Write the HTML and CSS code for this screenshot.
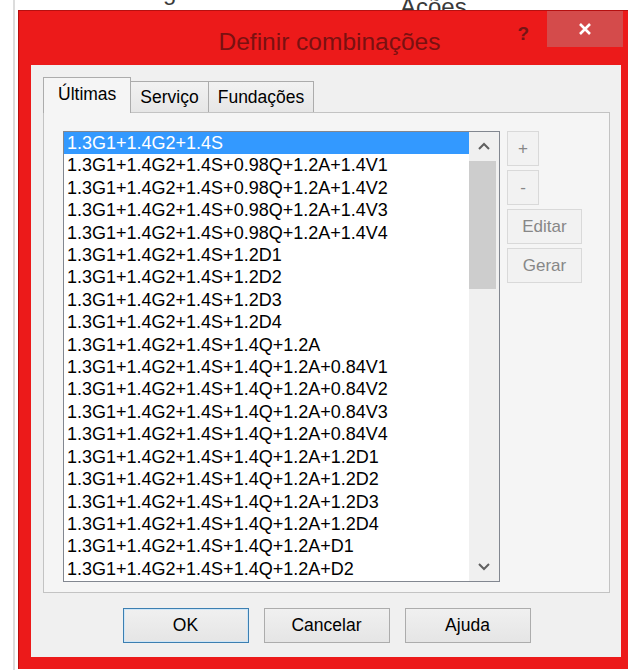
FILE: index.html
```html
<!DOCTYPE html>
<html lang="pt">
<head>
<meta charset="utf-8">
<title>Definir combinações</title>
<link rel="stylesheet" href="styles.css">
</head>
<body>
<div class="desk">
  <div class="behind">
    <div class="behind-row behind-row-a">g</div>
    <div class="behind-row behind-row-b">Ações</div>
  </div>

  <div class="dialog">
    <div class="titlebar">
      <div class="title">Definir combinações</div>
      <div class="caption">
        <span class="help">?</span>
        <span class="close">
          <svg width="14" height="12" viewBox="0 0 14 12"><path d="M2 1 L12 11 M12 1 L2 11" stroke="#fff" stroke-width="2.6" fill="none"/></svg>
        </span>
      </div>
    </div>

    <div class="client">
      <div class="tabs">
        <div class="tab active">Últimas</div>
        <div class="tab">Serviço</div>
        <div class="tab">Fundações</div>
      </div>

      <div class="pane">
        <div class="listbox">
          <ul class="items">
            <li class="sel">1.3G1+1.4G2+1.4S</li>
            <li>1.3G1+1.4G2+1.4S+0.98Q+1.2A+1.4V1</li>
            <li>1.3G1+1.4G2+1.4S+0.98Q+1.2A+1.4V2</li>
            <li>1.3G1+1.4G2+1.4S+0.98Q+1.2A+1.4V3</li>
            <li>1.3G1+1.4G2+1.4S+0.98Q+1.2A+1.4V4</li>
            <li>1.3G1+1.4G2+1.4S+1.2D1</li>
            <li>1.3G1+1.4G2+1.4S+1.2D2</li>
            <li>1.3G1+1.4G2+1.4S+1.2D3</li>
            <li>1.3G1+1.4G2+1.4S+1.2D4</li>
            <li>1.3G1+1.4G2+1.4S+1.4Q+1.2A</li>
            <li>1.3G1+1.4G2+1.4S+1.4Q+1.2A+0.84V1</li>
            <li>1.3G1+1.4G2+1.4S+1.4Q+1.2A+0.84V2</li>
            <li>1.3G1+1.4G2+1.4S+1.4Q+1.2A+0.84V3</li>
            <li>1.3G1+1.4G2+1.4S+1.4Q+1.2A+0.84V4</li>
            <li>1.3G1+1.4G2+1.4S+1.4Q+1.2A+1.2D1</li>
            <li>1.3G1+1.4G2+1.4S+1.4Q+1.2A+1.2D2</li>
            <li>1.3G1+1.4G2+1.4S+1.4Q+1.2A+1.2D3</li>
            <li>1.3G1+1.4G2+1.4S+1.4Q+1.2A+1.2D4</li>
            <li>1.3G1+1.4G2+1.4S+1.4Q+1.2A+D1</li>
            <li>1.3G1+1.4G2+1.4S+1.4Q+1.2A+D2</li>
          </ul>
          <div class="vscroll">
            <div class="arrow">
              <svg width="12" height="8" viewBox="0 0 12 8"><path d="M1 7 L6 2 L11 7" stroke="#606060" stroke-width="2" fill="none"/></svg>
            </div>
            <div class="thumb"></div>
            <div class="track"></div>
            <div class="arrow">
              <svg width="12" height="8" viewBox="0 0 12 8"><path d="M1 1 L6 6 L11 1" stroke="#606060" stroke-width="2" fill="none"/></svg>
            </div>
          </div>
        </div>

        <div class="side">
          <button class="sbtn small" disabled>+</button>
          <button class="sbtn small" disabled>-</button>
          <button class="sbtn wide" disabled>Editar</button>
          <button class="sbtn wide" disabled>Gerar</button>
        </div>
      </div>

      <div class="actions">
        <button class="btn default">OK</button>
        <button class="btn">Cancelar</button>
        <button class="btn">Ajuda</button>
      </div>
    </div>
  </div>
</div>
</body>
</html>
```

FILE: styles.css
```css
* { box-sizing: border-box; }

html, body {
  margin: 0;
  height: 100%;
}

body {
  background: #ffffff;
  overflow: hidden;
  font-family: "Liberation Sans", Arial, sans-serif;
}

.desk {
  position: relative;
  width: 628px;
  height: 670px;
  overflow: hidden;
}

/* window lying behind the dialog */
.behind {
  display: flow-root;
  margin-left: 13px;
  height: 100%;
  border-left: 2px solid #dcdcdc;
  color: #3a3a3a;
  font-size: 24px;
  line-height: 24px;
}

.behind-row-a {
  margin-top: -20px;
  padding-left: 148px;
}

.behind-row-b {
  margin-top: -9px;
  padding-left: 385px;
}

/* dialog frame */
.dialog {
  position: absolute;
  left: 18px;
  top: 10px;
  width: 610px;
  height: 659px;
  background: #ec1a1a;
  border-top: 1px solid #b51010;
  border-left: 1px solid #b51010;
  display: flex;
  flex-direction: column;
}

.titlebar {
  height: 54px;
  display: grid;
  grid-template-columns: 1fr auto 1fr;
}

.title {
  grid-column: 2;
  padding-left: 12px;
  padding-top: 7px;
  font-size: 24.5px;
  line-height: 47px;
  color: #7a1111;
  white-space: nowrap;
}

.caption {
  grid-column: 3;
  display: flex;
  justify-content: flex-end;
  align-items: flex-start;
}

.help {
  margin-top: 5px;
  margin-right: 18px;
  font-size: 19px;
  font-weight: bold;
  line-height: 36px;
  color: #761515;
}

.close {
  width: 76px;
  height: 36px;
  margin-right: 5px;
  background: #d44b4b;
  display: flex;
  align-items: center;
  justify-content: center;
}

/* client area */
.client {
  flex: 1;
  margin: 0 7px 12px 12px;
  padding: 12px 11px 14px 12px;
  background: #f0f0f0;
  display: flex;
  flex-direction: column;
}

.tabs {
  height: 35px;
  display: flex;
  align-items: flex-end;
  position: relative;
  z-index: 1;
}

.tab {
  height: 31px;
  padding: 0 9px;
  margin-left: -1px;
  border: 1px solid #acacac;
  border-bottom: none;
  background: linear-gradient(#f2f2f2, #e6e6e6);
  font-size: 17.5px;
  line-height: 30px;
  color: #000;
}

.tab.active {
  height: 36px;
  margin-left: 0;
  margin-bottom: -1px;
  padding: 0 14px;
  background: #f5f5f5;
  line-height: 32px;
}

.pane {
  height: 481px;
  padding: 18px 0 0 19px;
  border: 1px solid #c3c3c3;
  background: #f5f5f5;
  display: flex;
  align-items: flex-start;
  gap: 7px;
}

/* list with its scroll bar */
.listbox {
  width: 437px;
  height: 451px;
  border: 1px solid #828790;
  background: #ffffff;
  display: flex;
}

.items {
  flex: 1;
  margin: 0;
  padding: 0;
  list-style: none;
  overflow: hidden;
}

.items li {
  padding-left: 3px;
  font-size: 18px;
  line-height: 22.4px;
  color: #000;
  white-space: nowrap;
}

.items li.sel {
  background: #3399ff;
  color: #ffffff;
}

.vscroll {
  width: 30px;
  background: #f0f0f0;
  display: flex;
  flex-direction: column;
}

.arrow {
  height: 28px;
  display: flex;
  align-items: center;
  justify-content: center;
}

.thumb {
  height: 128px;
  margin: 1px 3px 0 0;
  background: #cdcdcd;
}

.track {
  flex: 1;
}

/* disabled side buttons */
.side {
  display: flex;
  flex-direction: column;
  align-items: flex-start;
  gap: 4px;
}

.sbtn {
  height: 35px;
  padding: 0;
  border: 1px solid #d9d9d9;
  background: #f2f2f2;
  color: #878787;
  font-family: "Liberation Sans", Arial, sans-serif;
  font-size: 17px;
}

.sbtn.small { width: 32px; }
.sbtn.wide { width: 75px; }

/* dialog buttons */
.actions {
  margin-top: 15px;
  display: flex;
  justify-content: center;
  gap: 15px;
}

.btn {
  width: 126px;
  height: 35px;
  padding: 0;
  border: 1px solid #acacac;
  background: linear-gradient(#f0f0f0, #e5e5e5);
  color: #000;
  font-family: "Liberation Sans", Arial, sans-serif;
  font-size: 17.5px;
}

.btn.default {
  border-color: #3c7fb1;
  box-shadow: inset 0 0 0 1px #cfe6f7;
}
```
